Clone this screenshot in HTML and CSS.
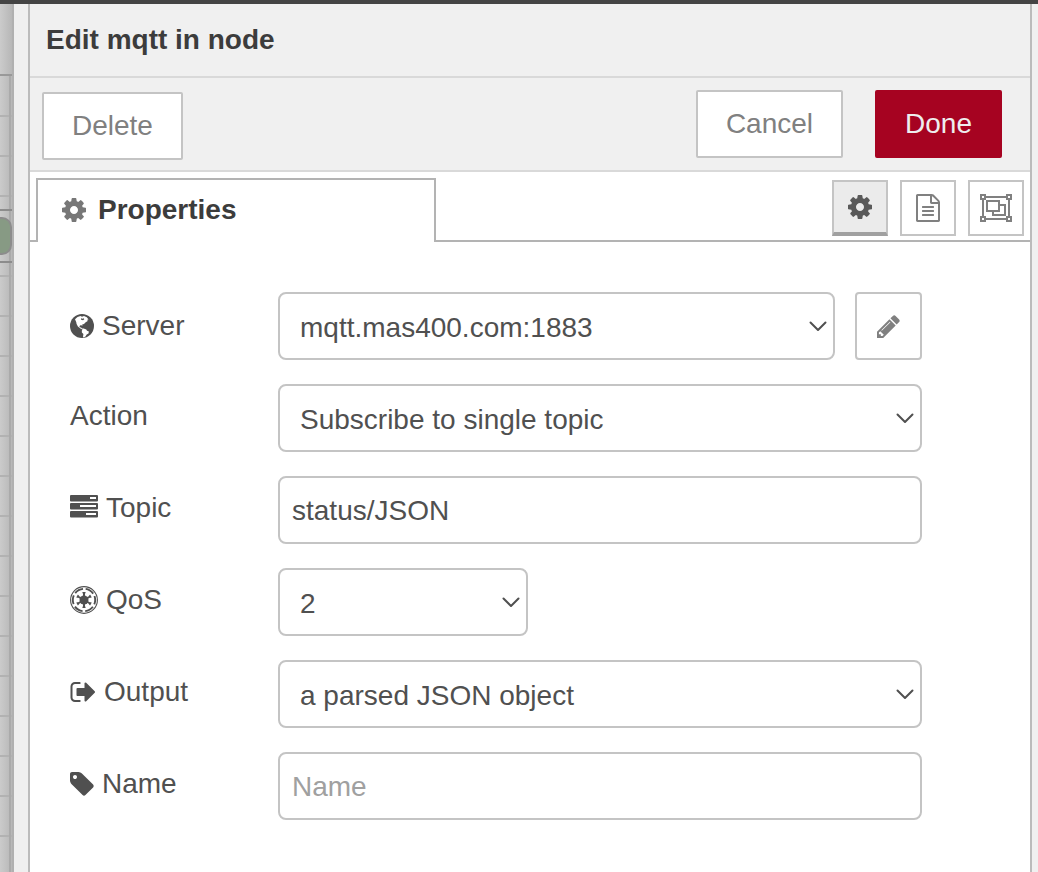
FILE: index.html
```html
<!DOCTYPE html>
<html lang="en">
<head>
<meta charset="utf-8">
<title>Edit mqtt in node</title>
<link rel="stylesheet" href="styles.css">
</head>
<body>
<svg class="symbols" aria-hidden="true">
  <symbol id="cog" viewBox="128 128 1536 1536"><path d="M1152 896q0-106-75-181t-181-75-181 75-75 181 75 181 181 75 181-75 75-181zm512-109v222q0 12-8 23t-20 13l-185 28q-19 54-39 91 35 50 107 138 10 12 10 25t-9 23q-27 37-99 108t-94 71q-12 0-26-9l-138-108q-44 23-91 38-16 136-29 186-7 28-36 28h-222q-14 0-24.500-8.500t-11.500-21.500l-28-184q-49-16-90-37l-141 107q-10 9-25 9-14 0-25-11-126-114-165-168-7-10-7-23 0-12 8-23 15-21 51-66.500t54-70.500q-27-50-41-99l-183-27q-13-2-21-12.500t-8-23.500v-222q0-12 8-23t19-13l186-28q14-46 39-92-40-57-107-138-10-12-10-24 0-10 9-23 26-36 98.500-107.500t94.500-71.500q13 0 26 10l138 107q44-23 91-38 16-136 29-186 7-28 36-28h222q14 0 24.500 8.500t11.500 21.500l28 184q49 16 90 37l142-107q9-9 24-9 13 0 25 10 129 119 165 170 7 8 7 22 0 12-8 23-15 21-51 66.500t-54 70.500q26 50 41 98l183 28q13 2 21 12.500t8 23.500z"/></symbol>
  <symbol id="chevron" viewBox="0 0 18 11"><path d="M1.500 1.500 9 9l7.500-7.500" fill="none" stroke="currentColor" stroke-width="2" stroke-linecap="round" stroke-linejoin="round"/></symbol>
</svg>
<div class="topbar"></div>
<div class="editor">
  <div class="workspace"><div class="lane"><div class="node"></div></div></div>
  <div class="separator"></div>
  <main class="tray">
    <header class="tray-header"><h1>Edit mqtt in node</h1></header>
    <div class="toolbar">
      <button class="btn delete" type="button">Delete</button>
      <div class="actions">
        <button class="btn" type="button">Cancel</button>
        <button class="btn primary" type="button">Done</button>
      </div>
    </div>
    <div class="tabs">
      <button class="tab" type="button"><svg class="icon cog"><use href="#cog"/></svg>Properties</button>
      <div class="tab-buttons">
        <button class="icon-btn selected" type="button" aria-label="Properties"><svg class="icon cog"><use href="#cog"/></svg></button>
        <button class="icon-btn" type="button" aria-label="Description"><svg class="icon doc" viewBox="128 0 1536 1792"><path d="M1596 380q28 28 48 76t20 88v1152q0 40-28 68t-68 28h-1344q-40 0-68-28t-28-68v-1600q0-40 28-68t68-28h896q40 0 88 20t76 48zm-444-244v376h376q-10-29-22-41l-313-313q-12-12-41-22zm384 1528v-1024h-416q-40 0-68-28t-28-68v-416h-768v1536h1280zm-1024-864q0-14 9-23t23-9h704q14 0 23 9t9 23v64q0 14-9 23t-23 9h-704q-14 0-23-9t-9-23v-64zm736 224q14 0 23 9t9 23v64q0 14-9 23t-23 9h-704q-14 0-23-9t-9-23v-64q0-14 9-23t23-9h704zm0 256q14 0 23 9t9 23v64q0 14-9 23t-23 9h-704q-14 0-23-9t-9-23v-64q0-14 9-23t23-9h704z"/></svg></button>
        <button class="icon-btn" type="button" aria-label="Appearance"><svg class="icon group" viewBox="0 0 32 28"><g fill="none" stroke="currentColor" stroke-width="2"><path d="M6 3h20M6 25h20M3 6v16M29 6v16"/><path d="M1 1h4v4H1zM27 1h4v4h-4zM1 23h4v4H1zM27 23h4v4h-4z"/><path d="M7 7h12v10H7z"/><path d="M19 11h6v10H13v-4"/></g></svg></button>
      </div>
    </div>
    <form class="form">
      <div class="row">
        <label class="tall" for="server"><svg class="icon cog" viewBox="0 0 24 24"><circle cx="12" cy="12" r="12"/><path fill="#fff" d="M5 5.200 7.500 3l3-1 1.500.8 2-.7 2.800 1.200 1.700 2.200-1.300.2.500 1.300-2 1.200-1.700 1.800-1.800.6.200 1.300-1.400-.8-1.500.8.200 1.300 1.400.2.900 1.200 1.700-.2 2.600 1.200.7 1.200 1.900.7-.4 2-1.800 1.100-1.200 1.900-1.900 1-.6-.8.400-2.600-1.500-1.600-.1-1.800.7-1.200-2.100-.9-2.500-2.100-1.300-2.600-.4-2z"/><path d="M11 4.200l1.500.6 1.200-.6.600 1-1.300 1-1.900-.5z"/></svg>Server</label>
        <div class="field">
          <div class="select"><select id="server"><option>mqtt.mas400.com:1883</option></select><svg class="chevron"><use href="#chevron"/></svg></div>
          <button class="edit" type="button" aria-label="Edit server"><svg class="icon pencil" viewBox="128 128 1536 1536"><path d="M491 1536l91-91-235-235-91 91v107h128v128h107zm523-928q0-22-22-22-10 0-17 7l-542 542q-7 7-7 17 0 22 22 22 10 0 17-7l542-542q7-7 7-17zm-54-192l416 416-832 832h-416v-416zm683 96q0 53-37 90l-166 166-416-416 166-165q36-38 90-38 53 0 91 38l235 234q37 39 37 91z"/></svg></button>
        </div>
      </div>
      <div class="row">
        <label for="action">Action</label>
        <div class="select"><select id="action"><option>Subscribe to single topic</option></select><svg class="chevron"><use href="#chevron"/></svg></div>
      </div>
      <div class="row">
        <label for="topic"><svg class="icon wide" viewBox="0 0 28 28"><path fill-rule="evenodd" d="M1 1h26q1 0 1 1v4.500q0 1-1 1H1q-1 0-1-1V2q0-1 1-1zm19 2v2h6V3zM1 9h26q1 0 1 1v4.500q0 1-1 1H1q-1 0-1-1V10q0-1 1-1zm9 2v2h16v-2zM1 17h26q1 0 1 1v4.500q0 1-1 1H1q-1 0-1-1V18q0-1 1-1zm15 2v2h10v-2z"/></svg>Topic</label>
        <input id="topic" type="text" value="status/JSON">
      </div>
      <div class="row">
        <label for="qos"><svg class="icon wide" viewBox="0 0 28 28"><g fill="none" stroke="currentColor"><circle cx="14" cy="14" r="13.400" stroke-width="1.100"/><circle cx="14" cy="14" r="11.200" stroke-width="1.900" stroke-dasharray="9 2.729" stroke-dashoffset="4.500"/><path stroke-width="2" d="M14 6.500v15M7.500 10.250l13 7.500M20.500 10.250l-13 7.500"/></g><circle cx="14" cy="14" r="4.500"/><path id="tooth" d="M12.300 6h3.400l-.6 1.800h-2.200z"/><use href="#tooth" transform="rotate(60 14 14)"/><use href="#tooth" transform="rotate(120 14 14)"/><use href="#tooth" transform="rotate(180 14 14)"/><use href="#tooth" transform="rotate(240 14 14)"/><use href="#tooth" transform="rotate(300 14 14)"/></svg>QoS</label>
        <div class="select short"><select id="qos"><option>2</option></select><svg class="chevron"><use href="#chevron"/></svg></div>
      </div>
      <div class="row">
        <label for="output"><svg class="icon out" viewBox="64 128 1600 1536"><path d="M704 1440q0 4 1 20t.5 26.500-3 23.500-10 19.500-20.500 6.500h-320q-119 0-203.500-84.500t-84.500-203.500v-704q0-119 84.500-203.500t203.500-84.500h320q13 0 22.500 9.500t9.500 22.500q0 4 1 20t.5 26.500-3 23.500-10 19.500-20.500 6.500h-320q-66 0-113 47t-47 113v704q0 66 47 113t113 47h312l11.500 1 11.500 3 8 5.500 7 9 2 13.500zm928-544q0 26-19 45l-544 544q-19 19-45 19t-45-19-19-45v-288h-448q-26 0-45-19t-19-45v-384q0-26 19-45t45-19h448v-288q0-26 19-45t45-19 45 19l544 544q19 19 19 45z"/></svg>Output</label>
        <div class="select"><select id="output"><option>a parsed JSON object</option></select><svg class="chevron"><use href="#chevron"/></svg></div>
      </div>
      <div class="row">
        <label for="name"><svg class="icon cog" viewBox="128 128 1536 1536"><path d="M576 448q0-53-37.500-90.500t-90.500-37.500-90.500 37.500-37.500 90.500 37.500 90.500 90.500 37.500 90.500-37.500 37.500-90.500zm1067 576q0 53-37 90l-491 492q-39 37-91 37-53 0-90-37l-715-716q-38-37-64.500-101t-26.500-117v-416q0-52 38-90t90-38h416q53 0 117 26.500t102 64.500l715 714q37 39 37 91z"/></svg>Name</label>
        <input id="name" type="text" placeholder="Name">
      </div>
    </form>
  </main>
</div>
</body>
</html>
```
FILE: styles.css
```css
* { box-sizing: border-box; }
body {
  margin: 0;
  min-height: 100vh;
  display: flex;
  flex-direction: column;
  background: #f0f0f0;
  color: #505050;
  font: 28px/36px "Liberation Sans", Arial, sans-serif;
}
button, input, select { font: inherit; color: inherit; margin: 0; }
.symbols { display: none; }
.icon { fill: currentColor; flex: none; }
.cog { width: 24px; height: 24px; }
.pencil { width: 23px; height: 23px; }
.doc { width: 24px; height: 28px; }
.group { width: 32px; height: 28px; }
.wide { width: 28px; height: 28px; }
.out { width: 26px; height: 24px; }

.topbar { height: 4px; background: #444; }
.editor { flex: 1; display: flex; padding-right: 6px; }
.workspace {
  width: 14px;
  padding-top: 70px;
  border-right: 2px solid #b0b0b0;
  background: linear-gradient(90deg, #cbcbcb, #b7b7b7);
}
.lane {
  height: 100%;
  padding-top: 133px;
  border-top: 2px solid #999;
  background:
    linear-gradient(#8c8c8c, #8c8c8c) 0 133px / 100% 2px no-repeat,
    linear-gradient(#8c8c8c, #8c8c8c) 0 185px / 100% 2px no-repeat,
    linear-gradient(#aaa, #aaa) 9px 0 / 2px 100% no-repeat,
    repeating-linear-gradient(transparent 0 38px, #b2b2b2 38px 40px) 0 1px;
}
.node {
  height: 38px;
  margin-top: 8px;
  border: 2px solid #8c8c8c;
  border-left: 0;
  border-radius: 0 10px 10px 0;
  background: #879a84;
}
.separator { width: 14px; background: #efefef; }
.tray {
  flex: 1;
  min-width: 0;
  border: solid #bbb;
  border-width: 0 2px;
  background: #fff;
}
.tray-header { padding: 18px 16px; border-bottom: 2px solid #d9d9d9; background: #f0f0f0; }
h1 { margin: 0; font-size: 28px; line-height: 36px; color: #3c3c3c; }
.toolbar {
  display: flex;
  justify-content: space-between;
  padding: 12px 28px 10px 12px;
  border-bottom: 2px solid #d9d9d9;
  background: #f0f0f0;
}
.btn {
  height: 68px;
  padding: 0 28px;
  border: 2px solid #c4c4c4;
  border-radius: 2px;
  background: #fff;
  color: #808080;
}
.delete { margin-top: 2px; }
.actions { display: flex; gap: 32px; }
.primary { border-color: #a60321; background: #a60321; color: #eee; }
.tabs {
  display: flex;
  justify-content: space-between;
  height: 70px;
  padding: 6px 6px 0;
  border-bottom: 2px solid #b3b3b3;
  background: #fff;
}
.tab {
  display: flex;
  align-items: center;
  gap: 12px;
  width: 400px;
  height: 64px;
  padding: 0 24px 2px;
  border: 2px solid #b3b3b3;
  border-bottom: 0;
  background: #fff;
  color: #3c3c3c;
  font-weight: bold;
}
.tab .icon { color: #777; }
.tab-buttons { display: flex; gap: 12px; padding-top: 2px; }
.icon-btn {
  display: flex;
  align-items: center;
  justify-content: center;
  width: 56px;
  height: 56px;
  padding: 0;
  border: 2px solid #c4c4c4;
  background: #fff;
  color: #808080;
}
.selected { border-bottom: 4px solid #a0a0a0; background: #ebebeb; color: #595959; }
.form { display: grid; gap: 24px; padding: 50px 108px 48px 40px; }
.row { display: grid; grid-template-columns: 208px 1fr; }
label { display: flex; align-items: center; gap: 8px; height: 64px; }
.tall { height: 68px; }
.field { display: flex; gap: 20px; }
.select { position: relative; flex: 1; }
.short { width: 250px; }
select, input {
  display: block;
  width: 100%;
  height: 68px;
  padding: 2px 12px 0;
  border: 2px solid #c4c4c4;
  border-radius: 8px;
  background: #fff;
}
select { appearance: none; padding: 4px 40px 0 20px; }
::placeholder { color: #a0a0a0; opacity: 1; }
.chevron {
  position: absolute;
  right: 8px;
  top: 29px;
  width: 18px;
  height: 11px;
  pointer-events: none;
}
.edit {
  display: flex;
  align-items: center;
  justify-content: center;
  width: 67px;
  height: 68px;
  border: 2px solid #c4c4c4;
  border-radius: 4px;
  background: #fff;
  color: #808080;
}
```
